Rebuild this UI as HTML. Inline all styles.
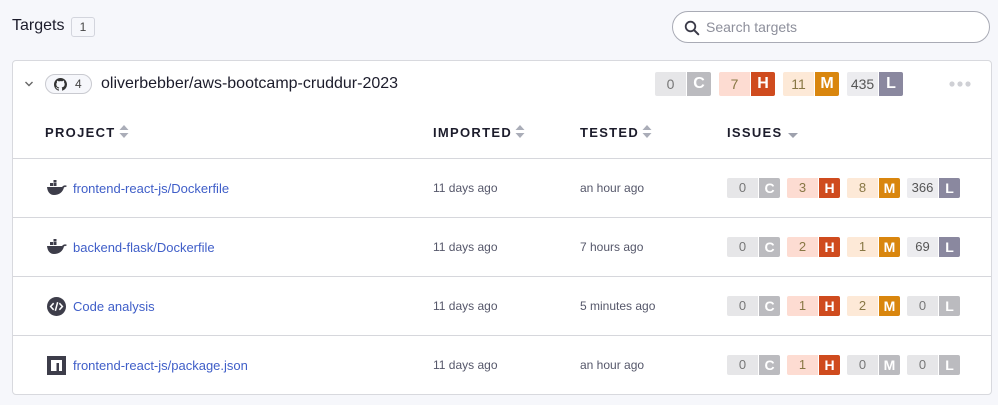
<!DOCTYPE html>
<html><head><meta charset="utf-8"><style>
*{box-sizing:border-box;margin:0;padding:0}
body{width:998px;height:405px;background:#f6f7fb;font-family:"Liberation Sans",Arial,sans-serif;position:relative;overflow:hidden;color:#1c1c2b}
.abs{position:absolute}
.title{left:12px;top:17px;font-size:16px;color:#1c1c2b}
.cnt{left:71px;top:17px;width:24px;height:20px;border:1px solid #d3d5dd;border-radius:3px;background:#f6f7fb;font-size:12px;text-align:center;line-height:18px;color:#444}
.search{left:672px;top:11px;width:318px;height:32px;border:1px solid #a9abb5;border-radius:16px;background:#fff}
.search span{position:absolute;left:33px;top:7px;font-size:14px;color:#8d8f9b}
.card{left:12px;top:60px;width:980px;height:335px;background:#fff;border:1px solid #d8d9de;border-radius:4px}
.pill{left:45px;top:74px;width:47px;height:20px;border:1px solid #c9cad0;border-radius:10px;background:#f6f7fb;font-size:12px;color:#444}
.repo{left:101px;top:75px;font-size:16px;color:#1c1c2b}
.th{top:125px;font-size:13px;font-weight:bold;letter-spacing:1.3px;color:#1c1c2b}
.th svg{vertical-align:-1px;margin-left:3px}
.line{left:13px;width:978px;height:1px;background:#d6d7dc}
.a{font-size:13px;color:#3f5ec8}
.d{font-size:12px;color:#55576a}
.b{position:absolute;height:20px;font-size:13px;line-height:20px;text-align:center;border-radius:2px}
.b.n{width:31px;border-radius:2px 0 0 2px}
.b.l{width:21px;font-weight:bold;font-size:14px;color:#fff;border-radius:0 2px 2px 0}
.big .b{height:24px;line-height:24px;font-size:14px}
.big .b.l{width:24px;font-size:16px}
</style></head><body>
<div class="abs title">Targets</div>
<div class="abs cnt">1</div>
<div class="abs search">
<svg style="position:absolute;left:11px;top:8px" width="16" height="16" viewBox="0 0 16 16"><circle cx="6.5" cy="6.5" r="4.8" fill="none" stroke="#3a3a48" stroke-width="1.8"/><path d="M10 10l4.3 4.3" stroke="#3a3a48" stroke-width="2" stroke-linecap="round"/></svg>
<span>Search targets</span></div>
<div class="abs card"></div>
<svg class="abs" style="left:24px;top:80px" width="10" height="8" viewBox="0 0 10 8"><path d="M1.5 2l3.5 3.5L8.5 2" fill="none" stroke="#666" stroke-width="1.4"/></svg>
<div class="abs pill">
<svg style="position:absolute;left:8px;top:3px" width="13" height="13" viewBox="0 0 16 16"><path fill="#333" d="M8 0C3.58 0 0 3.58 0 8c0 3.54 2.290 6.53 5.47 7.59.4.07.55-.17.55-.38v-1.33c-2.23.48-2.7-1.070-2.7-1.07-.36-.92-.89-1.17-.89-1.17-.73-.5.05-.49.05-.49.8.06 1.23.83 1.23.83.72 1.22 1.87.87 2.33.66.07-.52.28-.87.51-1.07-1.78-.2-3.65-.89-3.65-3.95 0-.87.31-1.59.82-2.15-.08-.2-.36-1.02.08-2.12 0 0 .67-.21 2.2.82A7.6 7.6 0 0 1 8 3.86c.68 0 1.36.09 2 .27 1.53-1.04 2.2-.82 2.2-.82.44 1.1.16 1.92.08 2.12.51.56.82 1.27.82 2.15 0 3.07-1.87 3.750-3.65 3.95.29.25.54.73.54 1.48v2.2c0 .21.15.46.55.38A8 8 0 0 0 16 8c0-4.42-3.58-8-8-8z"/></svg>
<span style="position:absolute;left:29px;top:2px">4</span></div>
<div class="abs repo">oliverbebber/aws-bootcamp-cruddur-2023</div>
<div class="big">
<div class="b n" style="left:655px;top:72px;background:#e6e6e8;color:#777">0</div><div class="b l" style="left:687px;top:72px;background:#bbbbbf">C</div>
<div class="b n" style="left:719px;top:72px;background:#fddcd2;color:#874">7</div><div class="b l" style="left:751px;top:72px;background:#cf4b1e">H</div>
<div class="b n" style="left:783px;top:72px;background:#fde9d7;color:#874">11</div><div class="b l" style="left:815px;top:72px;background:#d9860e">M</div>
<div class="b n" style="left:847px;top:72px;background:#ececef;color:#555">435</div><div class="b l" style="left:879px;top:72px;background:#8a889f">L</div>
</div>
<svg class="abs" style="left:949px;top:81px" width="22" height="6" viewBox="0 0 22 6"><g fill="#cfd0d5"><circle cx="3" cy="3" r="2.6"/><circle cx="11" cy="3" r="2.6"/><circle cx="19" cy="3" r="2.6"/></g></svg>
<div class="abs th" style="left:45px">PROJECT<svg width="10" height="13" viewBox="0 0 10 13"><path d="M5 0l4.5 5h-9zM5 13l4.5-5h-9z" fill="#aaadb8"/></svg></div>
<div class="abs th" style="left:433px">IMPORTED<svg width="10" height="13" viewBox="0 0 10 13"><path d="M5 0l4.5 5h-9zM5 13l4.5-5h-9z" fill="#aaadb8"/></svg></div>
<div class="abs th" style="left:580px">TESTED<svg width="10" height="13" viewBox="0 0 10 13"><path d="M5 0l4.5 5h-9zM5 13l4.5-5h-9z" fill="#aaadb8"/></svg></div>
<div class="abs th" style="left:727px">ISSUES<svg width="12" height="8" viewBox="0 0 12 8" style="vertical-align:-2px;margin-left:5px"><path d="M1 2h10l-5 5z" fill="#9ea1ad"/></svg></div>
<div class="abs line" style="top:158px"></div>
<div class="abs line" style="top:217px"></div>
<div class="abs line" style="top:276px"></div>
<div class="abs line" style="top:335px"></div>

<svg class="abs" style="left:46px;top:180px" width="22" height="16" viewBox="0 0 22 16"><g fill="#3d3d4a"><rect x="4" y="3" width="3" height="3"/><rect x="7.5" y="3" width="3" height="3"/><rect x="7.5" y="0" width="3" height="2.6"/><path d="M1 7h15c1-1 2-2 4-1.5l1 .5c-1 1-2 1.2-3 1.2C17 12 13 15 8 15 4 15 1.5 12 1 7z"/></g></svg>
<div class="abs a" style="left:73px;top:181px">frontend-react-js/Dockerfile</div>
<svg class="abs" style="left:46px;top:239px" width="22" height="16" viewBox="0 0 22 16"><g fill="#3d3d4a"><rect x="4" y="3" width="3" height="3"/><rect x="7.5" y="3" width="3" height="3"/><rect x="7.5" y="0" width="3" height="2.6"/><path d="M1 7h15c1-1 2-2 4-1.5l1 .5c-1 1-2 1.2-3 1.2C17 12 13 15 8 15 4 15 1.5 12 1 7z"/></g></svg>
<div class="abs a" style="left:73px;top:240px">backend-flask/Dockerfile</div>
<svg class="abs" style="left:47px;top:297px" width="19" height="19" viewBox="0 0 20 20"><circle cx="10" cy="10" r="10" fill="#3d3d4a"/><path d="M7 6.5L3.8 10 7 13.5M13 6.5l3.2 3.5-3.2 3.5M11.2 5.5L8.8 14.5" fill="none" stroke="#fff" stroke-width="1.6"/></svg>
<div class="abs a" style="left:73px;top:299px">Code analysis</div>
<svg class="abs" style="left:47px;top:356px" width="19" height="19" viewBox="0 0 19 19"><rect width="19" height="19" fill="#3d3d4a"/><path d="M4 4h11v11h-3V7H9.5v8H4z" fill="#fff"/></svg>
<div class="abs a" style="left:73px;top:358px">frontend-react-js/package.json</div>

<div class="abs d" style="left:433px;top:181px">11 days ago</div>
<div class="abs d" style="left:433px;top:240px">11 days ago</div>
<div class="abs d" style="left:433px;top:299px">11 days ago</div>
<div class="abs d" style="left:433px;top:358px">11 days ago</div>
<div class="abs d" style="left:580px;top:181px">an hour ago</div>
<div class="abs d" style="left:580px;top:240px">7 hours ago</div>
<div class="abs d" style="left:580px;top:299px">5 minutes ago</div>
<div class="abs d" style="left:580px;top:358px">an hour ago</div>

<div style="position:absolute;left:0;top:178px">
<div class="b n" style="left:727px;background:#e6e6e8;color:#777">0</div><div class="b l" style="left:759px;background:#bbbbbf">C</div>
<div class="b n" style="left:787px;background:#fddcd2;color:#874">3</div><div class="b l" style="left:819px;background:#cf4b1e">H</div>
<div class="b n" style="left:847px;background:#fde9d7;color:#874">8</div><div class="b l" style="left:879px;background:#d9860e">M</div>
<div class="b n" style="left:907px;background:#ececef;color:#555">366</div><div class="b l" style="left:939px;background:#8a889f">L</div>
</div>
<div style="position:absolute;left:0;top:237px">
<div class="b n" style="left:727px;background:#e6e6e8;color:#777">0</div><div class="b l" style="left:759px;background:#bbbbbf">C</div>
<div class="b n" style="left:787px;background:#fddcd2;color:#874">2</div><div class="b l" style="left:819px;background:#cf4b1e">H</div>
<div class="b n" style="left:847px;background:#fde9d7;color:#874">1</div><div class="b l" style="left:879px;background:#d9860e">M</div>
<div class="b n" style="left:907px;background:#ececef;color:#555">69</div><div class="b l" style="left:939px;background:#8a889f">L</div>
</div>
<div style="position:absolute;left:0;top:296px">
<div class="b n" style="left:727px;background:#e6e6e8;color:#777">0</div><div class="b l" style="left:759px;background:#bbbbbf">C</div>
<div class="b n" style="left:787px;background:#fddcd2;color:#874">1</div><div class="b l" style="left:819px;background:#cf4b1e">H</div>
<div class="b n" style="left:847px;background:#fde9d7;color:#874">2</div><div class="b l" style="left:879px;background:#d9860e">M</div>
<div class="b n" style="left:907px;background:#e6e6e8;color:#777">0</div><div class="b l" style="left:939px;background:#bbbbbf">L</div>
</div>
<div style="position:absolute;left:0;top:355px">
<div class="b n" style="left:727px;background:#e6e6e8;color:#777">0</div><div class="b l" style="left:759px;background:#bbbbbf">C</div>
<div class="b n" style="left:787px;background:#fddcd2;color:#874">1</div><div class="b l" style="left:819px;background:#cf4b1e">H</div>
<div class="b n" style="left:847px;background:#e6e6e8;color:#777">0</div><div class="b l" style="left:879px;background:#bbbbbf">M</div>
<div class="b n" style="left:907px;background:#e6e6e8;color:#777">0</div><div class="b l" style="left:939px;background:#bbbbbf">L</div>
</div>
</body></html>
